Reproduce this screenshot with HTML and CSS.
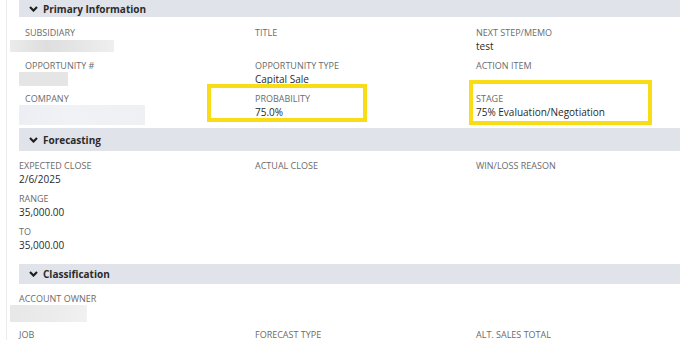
FILE: index.html
```html
<!DOCTYPE html>
<html>
<head>
<meta charset="utf-8">
<link rel="stylesheet" href="styles.css">
</head>
<body>
<div class="page">
  <div class="sec-head sec-head--first">
    <svg class="chev" width="9" height="6" viewBox="0 0 9 6"><polyline points="1,1 4.5,4.6 8,1" fill="none" stroke="#1f1f1f" stroke-width="2.1"/></svg>
    <span>Primary Information</span>
  </div>
  <div class="grid grid--primary">
    <div class="cell c1"><div class="lbl">SUBSIDIARY</div><div class="redact r-sub"></div></div>
    <div class="cell"><div class="lbl">TITLE</div></div>
    <div class="cell"><div class="lbl">NEXT STEP/MEMO</div><div class="val">test</div></div>

    <div class="cell c1"><div class="lbl">OPPORTUNITY #</div><div class="redact r-opp"></div></div>
    <div class="cell"><div class="lbl">OPPORTUNITY TYPE</div><div class="val">Capital Sale</div></div>
    <div class="cell"><div class="lbl">ACTION ITEM</div></div>

    <div class="cell c1"><div class="lbl">COMPANY</div><div class="redact r-comp"></div></div>
    <div class="cell hl"><div class="lbl">PROBABILITY</div><div class="val">75.0%</div><div class="mark mark-prob"></div></div>
    <div class="cell hl"><div class="lbl">STAGE</div><div class="val">75% Evaluation/Negotiation</div><div class="mark mark-stage"></div></div>
  </div>

  <div class="sec-head sec-head--fc">
    <svg class="chev" width="9" height="6" viewBox="0 0 9 6"><polyline points="1,1 4.5,4.6 8,1" fill="none" stroke="#1f1f1f" stroke-width="2.1"/></svg>
    <span>Forecasting</span>
  </div>
  <div class="grid grid--fc">
    <div class="cell"><div class="lbl">EXPECTED CLOSE</div><div class="val">2/6/2025</div></div>
    <div class="cell"><div class="lbl">ACTUAL CLOSE</div></div>
    <div class="cell"><div class="lbl">WIN/LOSS REASON</div></div>

    <div class="cell"><div class="lbl">RANGE</div><div class="val">35,000.00</div></div>
    <div class="cell"></div>
    <div class="cell"></div>

    <div class="cell"><div class="lbl">TO</div><div class="val">35,000.00</div></div>
    <div class="cell"></div>
    <div class="cell"></div>
  </div>

  <div class="sec-head sec-head--cl">
    <svg class="chev" width="9" height="6" viewBox="0 0 9 6"><polyline points="1,1 4.5,4.6 8,1" fill="none" stroke="#1f1f1f" stroke-width="2.1"/></svg>
    <span>Classification</span>
  </div>
  <div class="grid grid--cl">
    <div class="cell"><div class="lbl">ACCOUNT OWNER</div><div class="redact r-own"></div></div>
    <div class="cell"></div>
    <div class="cell"></div>

    <div class="cell"><div class="lbl">JOB</div></div>
    <div class="cell"><div class="lbl">FORECAST TYPE</div></div>
    <div class="cell"><div class="lbl">ALT. SALES TOTAL</div></div>
  </div>
</div>
</body>
</html>
```

FILE: styles.css
```css
html, body {
  margin: 0;
  padding: 0;
  background: #ffffff;
}
body {
  font-family: "Open Sans", "Liberation Sans", sans-serif;
  color: #333333;
  overflow: hidden;
  height: 340px;
}
.page {
  margin-left: 6px;
  border-left: 1px solid #ececec;
  padding-left: 12px;
  min-height: 340px;
}
.sec-head {
  display: flex;
  align-items: center;
  background: #e0e4ea;
  font-size: 10px;
  font-weight: 700;
  color: #2b2b2b;
  padding-left: 10px;
}
.sec-head .chev {
  margin-right: 5px;
  flex: none;
}
.sec-head--first {
  height: 17px;
}
.sec-head--fc {
  margin-top: 3px;
  height: 22px;
  padding-top: 1px;
}
.sec-head--cl {
  margin-top: 12px;
  height: 20px;
}
.grid {
  display: grid;
  grid-template-columns: 236px 221px 1fr;
  row-gap: 6px;
}
.grid--primary { padding-top: 9px; }
.grid--fc { padding-top: 8px; }
.grid--cl { padding-top: 8px; }
.cell {
  min-height: 27px;
}
.grid--primary .c1 {
  padding-left: 6px;
}
.hl {
  position: relative;
}
.lbl {
  font-size: 9px;
  line-height: 13px;
  color: #6b6b6b;
  white-space: nowrap;
}
.val {
  font-size: 10px;
  line-height: 14px;
  color: #2a2a2a;
  white-space: nowrap;
}
.redact {
  border-radius: 1px;
}
.r-sub {
  margin-top: 1px;
  margin-left: -15px;
  width: 104px;
  height: 12px;
  background: linear-gradient(90deg, #ebebeb 0%, #dedede 35%, #e4e4e4 60%, #efefef 100%);
}
.r-opp {
  margin-left: -6px;
  width: 49px;
  height: 14px;
  background: #e5e5e5;
}
.r-comp {
  margin-left: -6px;
  width: 126px;
  height: 20px;
  background: linear-gradient(90deg, #eceef3 0%, #f1f2f6 40%, #eef0f4 100%);
}
.r-own {
  margin-top: 0px;
  margin-left: -9px;
  width: 77px;
  height: 17px;
  background: linear-gradient(90deg, #e7e7e7 0%, #ececec 60%, #f1f1f1 100%);
}
.mark {
  position: absolute;
  border: 4px solid #f8dc15;
  box-sizing: border-box;
  pointer-events: none;
}
.mark-prob {
  left: -48px;
  top: -8px;
  width: 160px;
  height: 38px;
}
.mark-stage {
  left: -7px;
  top: -12px;
  width: 183px;
  height: 45px;
}
```
